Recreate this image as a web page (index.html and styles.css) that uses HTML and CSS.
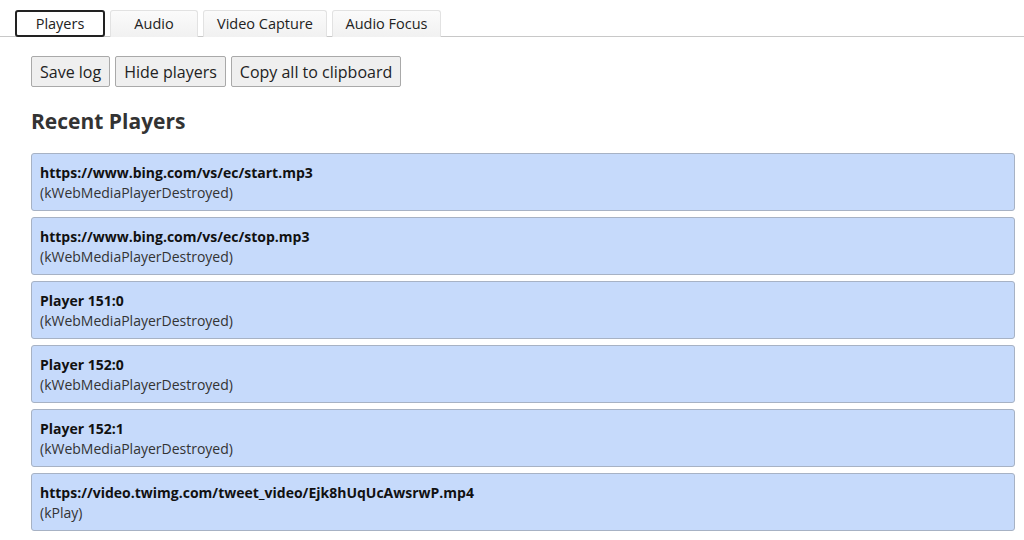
FILE: index.html
```html
<!DOCTYPE html>
<html>
<head>
<meta charset="utf-8">
<link rel="stylesheet" href="styles.css">
</head>
<body>
<div class="tabs">
  <div class="tab active">Players</div>
  <div class="tab">Audio</div>
  <div class="tab">Video Capture</div>
  <div class="tab">Audio Focus</div>
</div>
<div class="content">
  <div class="buttons">
    <button class="btn">Save log</button>
    <button class="btn">Hide players</button>
    <button class="btn">Copy all to clipboard</button>
  </div>
  <h2 class="heading">Recent Players</h2>
  <div class="list">
    <div class="card"><div class="title">https://www.bing.com/vs/ec/start.mp3</div><div class="sub">(kWebMediaPlayerDestroyed)</div></div>
    <div class="card"><div class="title">https://www.bing.com/vs/ec/stop.mp3</div><div class="sub">(kWebMediaPlayerDestroyed)</div></div>
    <div class="card"><div class="title">Player 151:0</div><div class="sub">(kWebMediaPlayerDestroyed)</div></div>
    <div class="card"><div class="title">Player 152:0</div><div class="sub">(kWebMediaPlayerDestroyed)</div></div>
    <div class="card"><div class="title">Player 152:1</div><div class="sub">(kWebMediaPlayerDestroyed)</div></div>
    <div class="card"><div class="title">https://video.twimg.com/tweet_video/Ejk8hUqUcAwsrwP.mp4</div><div class="sub">(kPlay)</div></div>
  </div>
</div>
</body>
</html>
```
FILE: styles.css
```css
html, body {
  margin: 0;
  padding: 0;
  background: #fff;
  font-family: "Open Sans", "Noto Sans", sans-serif;
  color: #222;
}
.tabs {
  display: flex;
  gap: 5px;
  padding: 10px 0 0 15px;
  border-bottom: 1px solid #c8c8c8;
  height: 26px;
}
.tab {
  box-sizing: border-box;
  height: 27px;
  padding: 0;
  white-space: nowrap;
  font-size: 14.5px;
  line-height: 26px;
  text-align: center;
  color: #222;
  background: linear-gradient(#fbfbfb, #f1f1f1);
  border: 1px solid #e2e2e2;
  border-bottom: none;
  border-radius: 3px 3px 0 0;
}
.tab:nth-child(1) { width: 90px; }
.tab:nth-child(2) { width: 88px; }
.tab:nth-child(3) { width: 124px; }
.tab:nth-child(4) { width: 109px; }
.tab.active {
  background: #fff;
  border: 2px solid #222;
  border-radius: 3px;
  line-height: 23px;
}
.content {
  padding: 19px 9px 0 31px;
}
.buttons {
  display: flex;
  gap: 5px;
}
.btn {
  box-sizing: border-box;
  height: 31px;
  padding: 0 8px;
  font-family: inherit;
  font-size: 16px;
  color: #222;
  background: #efefef;
  border: 1px solid #a9a9a9;
  border-radius: 2px;
}
.heading {
  margin: 20px 0 0 0;
  font-size: 21px;
  font-weight: 700;
  color: #333;
  line-height: 29px;
  height: 46px;
}
.list {
  display: flex;
  flex-direction: column;
  gap: 6px;
}
.card {
  box-sizing: border-box;
  height: 58px;
  padding: 9px 8px 0 8px;
  background: #c6dafb;
  border: 1px solid #a7b2c4;
  border-radius: 3px;
  font-size: 14px;
  line-height: 20px;
  color: #111;
}
.title { font-weight: 700; }
.sub { color: #333; }
```
